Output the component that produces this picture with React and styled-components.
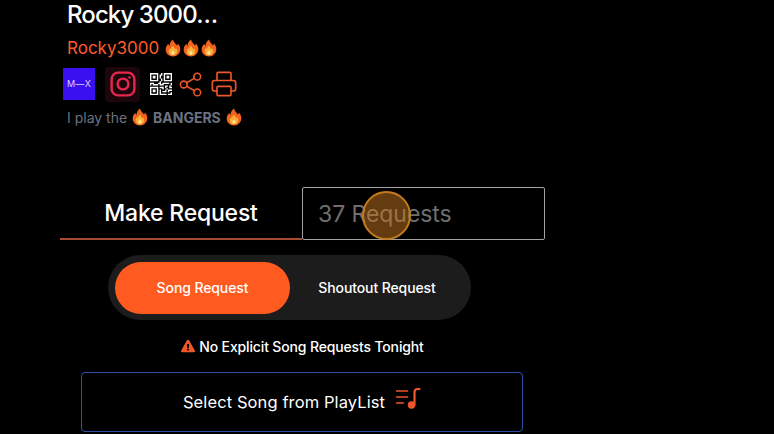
import styled, { createGlobalStyle } from "styled-components"
import { BsQrCode } from "react-icons/bs"
import { FaExclamationTriangle } from "react-icons/fa"
import { Printer, Share2 } from "lucide-react"

const GlobalStyle = createGlobalStyle`
    html, body {
        margin: 0;
        background: #000;
        font-family: Inter, "Liberation Sans", sans-serif;
        overflow: hidden;
    }
`

function Flame({ size = 18 }) {
    return (
        <FlameIcon width={size} height={size} viewBox="0 0 16 16">
            <path fill="#f0641e" d="M8 .5c.6 2.600 2.300 3.600 3.600 5.300.5-.5.7-1.100.7-1.800 1.500 1.500 2.200 3.300 2.200 5.100 0 3.600-2.800 6.400-6.500 6.400S1.500 12.800 1.500 9.300c0-2.300 1.200-3.700 2.300-5 .2.900.5 1.500 1.100 1.900C4.900 4 6.200 1.900 8 .5z" />
            <path fill="#fbb03b" d="M8.200 6c.3 1.500 1.400 2.100 2 3.100.3-.2.5-.5.600-.9.700.9 1 1.800 1 2.700 0 2-1.700 3.600-3.800 3.600s-3.800-1.500-3.800-3.500c0-1.300.7-2.200 1.400-2.900.1.500.3.800.6 1C6.200 7.800 7 6.800 8.200 6z" />
            <path fill="#fde68a" d="M8 10c.2.800.8 1.200 1.200 1.800.3.500.3 1.300-.1 1.800-.6.700-1.800.7-2.400 0-.4-.5-.4-1.200 0-1.800.4-.6 1-1 1.300-1.800z" />
        </FlameIcon>
    )
}

function InstagramIcon() {
    return (
        <svg width="26" height="26" viewBox="0 0 24 24" fill="none" stroke="#e8274f" strokeWidth="2.200">
            <rect x="1.500" y="1.500" width="21" height="21" rx="6" />
            <circle cx="12" cy="12" r="5" />
            <circle cx="18" cy="6" r="1.100" fill="#e8274f" stroke="none" />
        </svg>
    )
}

function PlaylistIcon() {
    return (
        <PlaylistSvg width="26" height="24" viewBox="0 0 26 24" fill="none" stroke="#f0562a" strokeWidth="1.500" strokeLinecap="round">
            <path d="M1.500 5h11M1.500 11h11M1.500 17h7" />
            <path d="M19.500 19V6.500c0-2 1-3.500 3-3.500h2" strokeWidth="2.200" />
            <circle cx="16.500" cy="19" r="3.700" fill="#f0562a" stroke="none" />
        </PlaylistSvg>
    )
}

function App() {
    return (
        <Page>
            <GlobalStyle />
            <Profile>
                <Title>Rocky 3000…</Title>
                <Handle>
                    Rocky3000 <Flame /><Flame /><Flame />
                </Handle>
                <Links>
                    <MixLogo>M—X</MixLogo>
                    <InstagramTile><InstagramIcon /></InstagramTile>
                    <BsQrCode size={22} color="#fff" />
                    <ShareIcon size={27} color="#f0562a" strokeWidth={1.400} />
                    <PrintIcon size={28} color="#f0562a" strokeWidth={1.400} />
                </Links>
                <Bio>
                    I play the <Flame /> <strong>BANGERS</strong> <Flame />
                </Bio>
            </Profile>

            <Tabs>
                <ActiveTab>Make Request</ActiveTab>
                <CountTab>37 Requests</CountTab>
                <Cursor />
            </Tabs>

            <Toggle>
                <ToggleOption $active>Song Request</ToggleOption>
                <ToggleOption>Shoutout Request</ToggleOption>
            </Toggle>

            <Notice>
                <FaExclamationTriangle size={14} color="#f0562a" />
                No Explicit Song Requests Tonight
            </Notice>

            <SelectButton>
                Select Song from PlayList
                <PlaylistIcon />
            </SelectButton>
        </Page>
    )
}

export default App


const Page = styled.div`
    width: 485px;
    height: 434px;
    margin-left: 60px;
    color: #fff;
    overflow: hidden;
`

const FlameIcon = styled.svg`
    vertical-align: -3px;
`

const PlaylistSvg = styled.svg`
    margin-top: -8px;
`

const ShareIcon = styled(Share2)`
    margin-left: -3px;
`

const PrintIcon = styled(Printer)`
    margin-left: -2px;
`

const Profile = styled.div`
    height: 187px;
    padding-left: 7px;
    box-sizing: border-box;
`

const Title = styled.div`
    font-size: 24px;
    font-weight: 500;
    line-height: 30px;
    letter-spacing: -0.9px;
`

const Handle = styled.div`
    margin-top: 4px;
    height: 24px;
    padding-top: 2px;
    font-size: 17px;
    line-height: 24px;
    color: #ff5a2c;
`

const Links = styled.div`
    display: flex;
    align-items: center;
    gap: 8px;
    margin: 8px 0 0 -4px;
    height: 32px;
`

const MixLogo = styled.div`
    width: 32px;
    height: 32px;
    background: #3b10f0;
    color: #d9d2ff;
    font-size: 9px;
    letter-spacing: 0.3px;
    line-height: 32px;
    text-align: center;
    margin-right: 2px;
`

const InstagramTile = styled.div`
    width: 35px;
    height: 35px;
    display: flex;
    align-items: center;
    justify-content: center;
    border-radius: 4px;
    background: #1c050b;
    margin-right: 2px;
`

const Bio = styled.div`
    margin-top: 8px;
    font-size: 14px;
    line-height: 20px;
    color: #6b7280;
    strong {
        font-weight: 700;
    }
`

const Tabs = styled.div`
    position: relative;
    display: grid;
    grid-template-columns: 242px 243px;
    height: 53px;
`

const ActiveTab = styled.div`
    display: flex;
    align-items: center;
    justify-content: center;
    font-size: 23px;
    font-weight: 500;
    letter-spacing: -0.2px;
    color: #fff;
    border-bottom: 2px solid #a84a35;
`

const CountTab = styled.div`
    box-sizing: border-box;
    display: flex;
    align-items: center;
    padding: 0 0 0 15px;
    font-size: 23px;
    letter-spacing: -0.05px;
    color: #6f6f6f;
    border: 1px solid #a3a3a3;
    border-radius: 2px;
`

const Cursor = styled.div`
    position: absolute;
    left: 302px;
    top: 4px;
    width: 49px;
    height: 49px;
    box-sizing: border-box;
    border-radius: 50%;
    background: rgba(200, 120, 30, 0.5);
    border: 2px solid #c47a1e;
`

const Toggle = styled.div`
    display: flex;
    align-items: center;
    width: 363px;
    height: 65px;
    box-sizing: border-box;
    margin: 15px 0 0 48px;
    padding: 0 7px;
    border-radius: 33px;
    background: #1c1c1c;
`

const ToggleOption = styled.div`
    width: ${props => props.$active ? '175px' : '174px'};
    height: 52px;
    display: flex;
    align-items: center;
    justify-content: center;
    border-radius: 26px;
    font-size: 14px;
    font-weight: 500;
    letter-spacing: -0.1px;
    background: ${props => props.$active ? '#ff5a1f' : 'transparent'};
`

const Notice = styled.div`
    display: flex;
    align-items: center;
    justify-content: center;
    gap: 4px;
    width: 485px;
    height: 20px;
    margin-top: 16px;
    font-size: 14px;
    font-weight: 500;
    letter-spacing: -0.15px;
`

const SelectButton = styled.div`
    display: flex;
    align-items: center;
    justify-content: center;
    gap: 10px;
    width: 442px;
    height: 60px;
    box-sizing: border-box;
    margin: 16px 0 0 21px;
    border: 1px solid #2f4fa8;
    border-radius: 4px;
    font-size: 16.5px;
    font-weight: 400;
    letter-spacing: 0.1px;
`
